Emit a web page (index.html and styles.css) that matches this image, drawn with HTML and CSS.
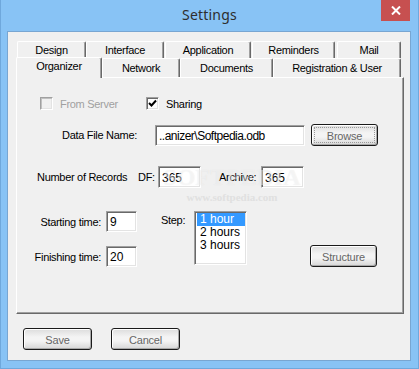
FILE: index.html
```html
<!DOCTYPE html>
<html lang="en">
<head>
    <meta charset="UTF-8">
    <title>Settings</title>
    <link rel="stylesheet" href="styles.css">
</head>
<body>
    <div class="window">
        <div class="titlebar">
            <span class="title">Settings</span>
            <span class="close">
                <svg width="10" height="9" viewBox="0 0 10 9"><path d="M1 0.5 L9 8.5 M9 0.5 L1 8.5" stroke="#fff" stroke-width="2"/></svg>
            </span>
        </div>

        <div class="client">
            <div class="tabs">
                <div class="tab-row back">
                    <div class="tab w-design">Design</div>
                    <div class="tab w-interface">Interface</div>
                    <div class="tab w-application">Application</div>
                    <div class="tab w-reminders">Reminders</div>
                    <div class="tab w-mail">Mail</div>
                </div>
                <div class="tab-row front">
                    <div class="tab active w-organizer">Organizer</div>
                    <div class="tab w-network">Network</div>
                    <div class="tab w-documents">Documents</div>
                    <div class="tab w-registration">Registration &amp; User</div>
                </div>
            </div>

            <div class="panel">
                <div class="row checks">
                    <label class="check disabled">
                        <span class="box"></span>
                        <span>From Server</span>
                    </label>
                    <label class="check">
                        <span class="box">
                            <svg width="9" height="9" viewBox="0 0 9 9"><path d="M1 4 L3.5 6.5 L8 1.5" fill="none" stroke="#000" stroke-width="2"/></svg>
                        </span>
                        <span>Sharing</span>
                    </label>
                </div>

                <div class="row file-row">
                    <span class="file-label">Data File Name:</span>
                    <div class="field file-field">..anizer\Softpedia.odb</div>
                    <button class="btn focused"><span>Browse</span></button>
                </div>

                <div class="row records-row">
                    <span class="records-label">Number of Records</span>
                    <span class="df-label">DF:</span>
                    <div class="field num-field">365</div>
                    <span class="archive-label">Archive:</span>
                    <div class="field num-field">365</div>
                </div>

                <div class="row lower">
                    <div class="times">
                        <span class="time-label">Starting time:</span>
                        <div class="field time-field">9</div>
                        <span class="time-label">Finishing time:</span>
                        <div class="field time-field">20</div>
                    </div>
                    <span class="step-label">Step:</span>
                    <ul class="listbox">
                        <li class="selected">1 hour</li>
                        <li>2 hours</li>
                        <li>3 hours</li>
                    </ul>
                    <button class="btn structure"><span>Structure</span></button>
                </div>

                <div class="watermark">
                    <span class="wm-big">SOFTPEDIA</span>
                    <span class="wm-small">www.softpedia.com</span>
                </div>
            </div>

            <div class="actions">
                <button class="btn"><span>Save</span></button>
                <button class="btn"><span>Cancel</span></button>
            </div>
        </div>
    </div>
</body>
</html>
```

FILE: styles.css
```css
body {
    margin: 0;
    background: #88c3f5;
    font-family: 'Liberation Sans', Arial, sans-serif;
    font-size: 11px;
    letter-spacing: -0.3px;
    color: #000;
}
.window {
    width: 419px;
    height: 369px;
    box-sizing: border-box;
    border: 1px solid #6fa8dc;
    border-top: none;
}
.titlebar {
    height: 31px;
    position: relative;
    text-align: center;
}
.title {
    display: inline-block;
    margin-top: 5px;
    font-family: 'Noto Sans', 'Open Sans', sans-serif;
    font-size: 14px;
    color: #2e2e2e;
    letter-spacing: 0.2px;
}
.close {
    position: absolute;
    top: 0;
    right: 8px;
    width: 29px;
    height: 21px;
    background: #c75050;
    display: flex;
    align-items: center;
    justify-content: center;
}
.client {
    margin: 0 7px 0 6px;
    height: 330px;
    box-sizing: border-box;
    border: 1px solid #78a6d2;
    background: #f0f0f0;
}

/* tabs */
.tabs {
    padding-top: 9px;
}
.tab-row {
    display: flex;
    align-items: flex-end;
}
.tab-row.back {
    height: 17px;
    padding-left: 9px;
}
.tab-row.front {
    height: 19px;
    padding-left: 8px;
}
.tab {
    box-sizing: border-box;
    height: 100%;
    border-top: 1px solid #fff;
    border-left: 1px solid #fff;
    border-right: 1px solid #696969;
    box-shadow: inset -1px 0 0 #a0a0a0;
    border-radius: 2px 2px 0 0;
    background: #f0f0f0;
    text-align: center;
    padding-top: 2px;
    white-space: nowrap;
}
.tab-row.front .tab {
    padding-top: 3px;
}
.tab-row.front .tab.active {
    height: 21px;
    margin-bottom: -1px;
    position: relative;
    z-index: 1;
    padding-top: 2px;
}
.w-design { width: 69px; }
.w-interface { width: 78px; }
.w-application { width: 86px; margin-left: 1px; }
.w-reminders { width: 83px; margin-left: 1px; }
.w-mail { width: 64px; margin-left: 2px; }
.w-organizer { width: 86px; }
.w-network { width: 78px; }
.w-documents { width: 93px; }
.w-registration { width: 128px; }

/* panel */
.panel {
    position: relative;
    margin-left: 8px;
    width: 388px;
    height: 237px;
    box-sizing: border-box;
    border-top: 1px solid #fff;
    border-left: 1px solid #fff;
    border-right: 1px solid #696969;
    border-bottom: 1px solid #696969;
    box-shadow: inset -1px -1px 0 #a0a0a0;
    padding-left: 23px;
}
.row {
    display: flex;
    align-items: center;
}
.checks {
    margin-top: 19px;
    height: 13px;
}
.check {
    display: flex;
    align-items: center;
    gap: 7px;
}
.check:first-child {
    width: 106px;
}
.check.disabled {
    color: #a0a0a0;
}
.box {
    width: 13px;
    height: 13px;
    box-sizing: border-box;
    background: #fff;
    border: 1px solid;
    border-color: #a0a0a0 #fff #fff #a0a0a0;
    box-shadow: inset 1px 1px 0 #696969, inset -1px -1px 0 #e3e3e3;
    display: flex;
    align-items: center;
    justify-content: center;
}
.check.disabled .box {
    background: #f0f0f0;
    box-shadow: inset 1px 1px 0 #c0c0c0, inset -1px -1px 0 #e3e3e3;
}
.field {
    box-sizing: border-box;
    background: #fff;
    border: 1px solid;
    border-color: #a0a0a0 #fff #fff #a0a0a0;
    box-shadow: inset 1px 1px 0 #696969, inset -1px -1px 0 #e3e3e3;
    padding: 3px 0 0 3px;
    font-size: 12px;
    letter-spacing: 0;
    white-space: nowrap;
    overflow: hidden;
    flex-shrink: 0;
}
.file-row {
    margin-top: 14px;
}
.file-label {
    width: 115px;
    flex-shrink: 0;
    box-sizing: border-box;
    padding-left: 22px;
}
.file-field {
    width: 150px;
    height: 21px;
    letter-spacing: -0.5px;
}
.btn {
    box-sizing: border-box;
    width: 67px;
    height: 22px;
    padding: 2px;
    border: 1px solid #1a1a1a;
    border-radius: 3px;
    background: linear-gradient(#dcdcdc, #f4f4f4 40%, #f4f4f4 60%, #d6d6d6);
    box-shadow: inset 1px 1px 0 #fff, inset -1px -1px 0 #a8a8a8;
    font-family: 'Liberation Sans', Arial, sans-serif;
    font-size: 11px;
    letter-spacing: -0.2px;
    color: #666;
    flex-shrink: 0;
}
.btn span {
    display: block;
    height: 100%;
    line-height: 16px;
    border: 1px dotted transparent;
    box-sizing: border-box;
}
.btn.focused span {
    border-color: #9a9a9a;
}
.file-row .btn {
    margin-left: 6px;
}
.records-row {
    margin-top: 20px;
    margin-left: -3px;
}
.records-label {
    width: 101px;
    flex-shrink: 0;
    white-space: nowrap;
}
.df-label {
    width: 20px;
    flex-shrink: 0;
}
.num-field {
    width: 43px;
    height: 22px;
    padding-top: 4px;
}
.archive-label {
    margin-left: 18px;
    width: 42px;
    flex-shrink: 0;
}

/* lower block */
.lower {
    margin-top: 23px;
    margin-left: -10px;
    align-items: flex-start;
}
.times {
    display: grid;
    grid-template-columns: 71px 31px;
    column-gap: 5px;
    row-gap: 14px;
    align-items: center;
}
.time-label {
    text-align: right;
    white-space: nowrap;
}
.time-field {
    height: 21px;
}
.step-label {
    margin-left: 24px;
    width: 33px;
    margin-top: 3px;
}
.listbox {
    list-style: none;
    margin: 0;
    width: 53px;
    height: 54px;
    box-sizing: border-box;
    padding: 1px;
    background: #fff;
    border: 1px solid;
    border-color: #a0a0a0 #fff #fff #a0a0a0;
    box-shadow: inset 1px 1px 0 #696969, inset -1px -1px 0 #e3e3e3;
    font-size: 12px;
    letter-spacing: 0;
}
.listbox li {
    height: 13px;
    line-height: 13px;
    padding-left: 3px;
    margin-left: 1px;
}
.listbox li.selected {
    background: #3399ff;
    color: #fff;
}
.structure {
    align-self: flex-end;
    margin-left: 63px;
}

/* softpedia watermark over the fields */
.watermark {
    position: absolute;
    left: 140px;
    top: 86px;
    width: 150px;
    display: flex;
    flex-direction: column;
    align-items: center;
    pointer-events: none;
}
.wm-big {
    font-family: 'Liberation Serif', serif;
    font-size: 24px;
    font-weight: bold;
    letter-spacing: 0;
    color: rgba(255, 255, 255, 0.45);
    text-shadow: 0 0 1px rgba(0, 0, 0, 0.08);
}
.wm-small {
    font-family: 'Liberation Serif', serif;
    font-size: 11px;
    font-weight: bold;
    letter-spacing: 0;
    color: #e0e0e0;
    margin-top: 0;
}

.actions {
    display: flex;
    gap: 19px;
    margin-top: 14px;
    padding-left: 15px;
}
.actions .btn {
    width: 69px;
}
```
